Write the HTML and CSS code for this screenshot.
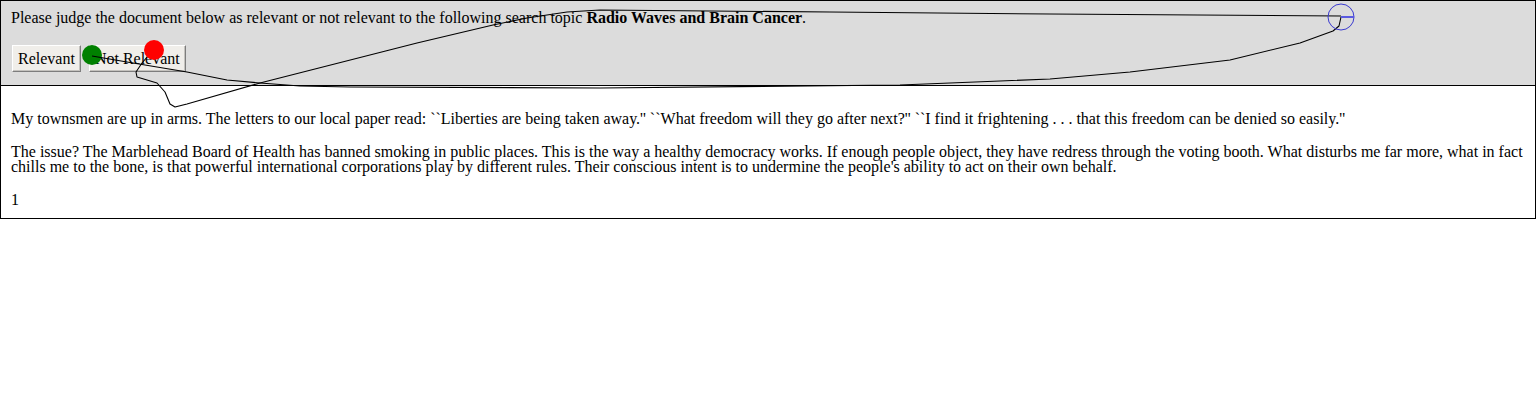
FILE: index.html
```html
<!DOCTYPE html>
<html>
<head>
<meta charset="utf-8">
<link rel="stylesheet" href="styles.css">
</head>
<body>
<div class="frame">
  <div class="judge">
    <p class="prompt">Please judge the document below as relevant or not relevant to the following search topic <b>Radio Waves and Brain Cancer</b>.</p>
    <div class="actions">
      <button class="btn">Relevant</button>
      <button class="btn">Not Relevant</button>
    </div>
  </div>
  <div class="doc">
    <p>My townsmen are up in arms. The letters to our local paper read: ``Liberties are being taken away.'' ``What freedom will they go after next?'' ``I find it frightening . . . that this freedom can be denied so easily.''</p>
    <p>The issue? The Marblehead Board of Health has banned smoking in public places. This is the way a healthy democracy works. If enough people object, they have redress through the voting booth. What disturbs me far more, what in fact chills me to the bone, is that powerful international corporations play by different rules. Their conscious intent is to undermine the people's ability to act on their own behalf.</p>
    <p class="last">1</p>
  </div>
</div>
<svg class="trace" width="1536" height="400" viewBox="0 0 1536 400">
  <circle cx="92" cy="55" r="10" fill="#008000"/>
  <polyline class="path" points="92,56 127,62 187,72 227,80 260,83 300,86 350,87 600,88 900,85 1000,81 1050,79 1130,72 1230,60 1300,43 1333,31 1339,26 1341,17"/>
  <polyline class="path" points="154,50 148,56 142,63 136,72 137,77 157,83 165,92 170,104 175,107 187,104 260,83 417,43 493,25 527,18 567,12 600,10 830,12 1050,14 1341,16"/>
  <circle cx="154" cy="50" r="10" fill="#ff0000"/>
  <circle cx="1341" cy="17" r="13" fill="none" stroke="#3a3ad0" stroke-width="1"/>
  <line x1="1341" y1="17" x2="1354" y2="17" stroke="#5a5ae0" stroke-width="2"/>
</svg>
</body>
</html>
```
FILE: styles.css
```css
html, body {
  margin: 0;
  padding: 0;
  background: #fff;
}
body {
  font-family: "Liberation Serif", "Times New Roman", serif;
  font-size: 16px;
  color: #000;
  position: relative;
}
.frame {
  border: 1px solid #000;
  width: 1534px;
}
.judge {
  background: #dcdcdc;
  border-bottom: 1px solid #000;
  padding: 8px 10px 13px 10px;
  display: flex;
  flex-direction: column;
  gap: 18px;
}
.prompt {
  margin: 0;
  line-height: 18px;
}
.actions {
  display: flex;
  gap: 8px;
  margin-left: 1px;
}
.btn {
  font-family: "Liberation Serif", "Times New Roman", serif;
  font-size: 16px;
  color: #000;
  height: 27px;
  box-sizing: border-box;
  padding: 0 5px;
  background: #f0eeea;
  border: 1px solid;
  border-color: #ffffff #7d7d7d #7d7d7d #ffffff;
  box-shadow: inset -1px -1px 0 #c4c2be;
  border-radius: 0;
  margin: 0;
}
.doc {
  padding: 7px 10px 11px 10px;
}
.doc p {
  margin: 18px 0;
  line-height: 15px;
}
.doc p.last {
  margin-bottom: 0;
}
.trace {
  position: absolute;
  left: 0;
  top: 0;
  pointer-events: none;
}
.trace .path {
  fill: none;
  stroke: #000;
  stroke-width: 1.1;
  stroke-linejoin: round;
}
```
